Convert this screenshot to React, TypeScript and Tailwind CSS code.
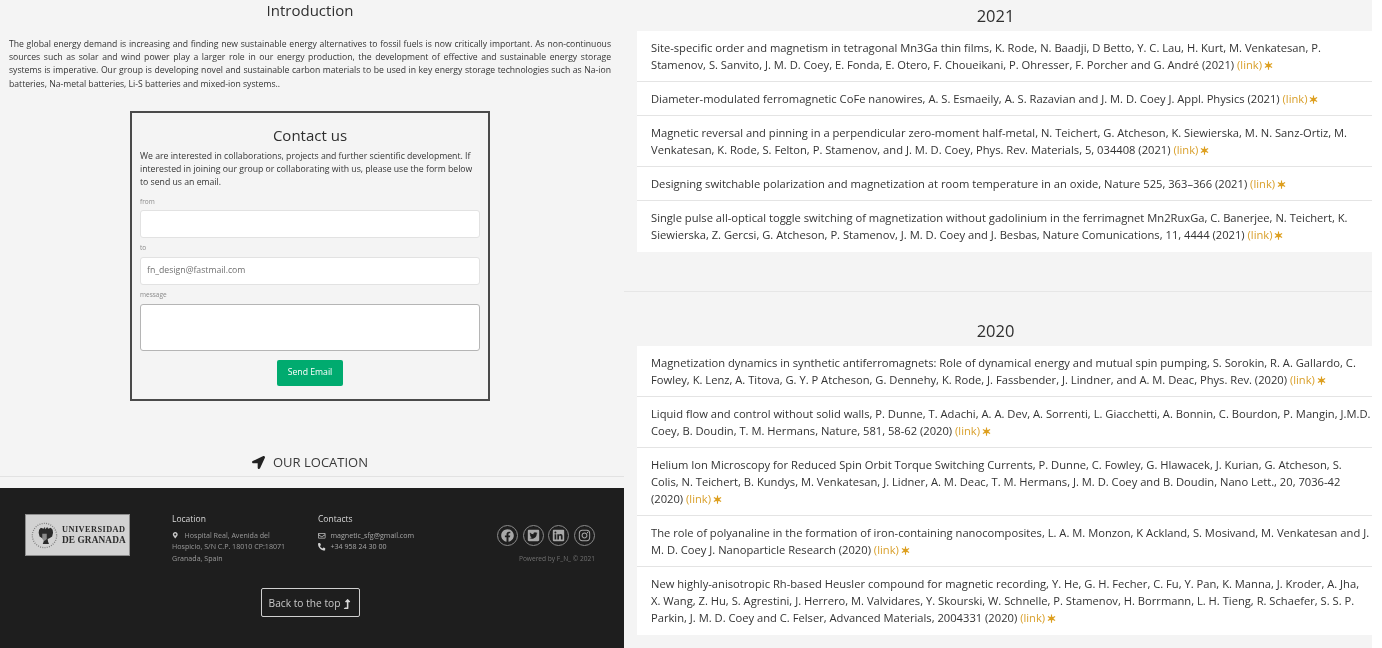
import React from "react";
import { FaLocationArrow, FaMapMarkerAlt, FaPhone, FaRegEnvelope, FaFacebook, FaTwitterSquare, FaLinkedin, FaInstagram, FaLevelUpAlt } from "react-icons/fa";

const font = { fontFamily: '"Open Sans", sans-serif' };

function Star() {
  return (
    <svg viewBox="0 0 12 12" className="inline-block w-[9px] h-[9px] align-[-0.5px] ml-[-1px]" fill="#dd9f1f" stroke="#dd9f1f">
      <circle cx="6" cy="6" r="2.800" stroke="none" />
      <path d="M6 .5V11.5M1.2 3.200L10.800 8.800M10.800 3.200L1.200 8.800" strokeWidth="1.500" />
    </svg>
  );
}

function Pub({ text, last }: { text: string; last?: boolean }) {
  return (
    <li className={`bg-white pl-[14px] py-[8px] text-[11.180px] leading-[17px] text-[#333333] border-b ${last ? "border-white pr-[2px]" : "border-[#e4e4e4]"}`}>
      {text} <a className="text-[#d9a02c]">(link)</a> <Star />
    </li>
  );
}

const y2021 = [
  "Site-specific order and magnetism in tetragonal Mn3Ga thin films, K. Rode, N. Baadji, D Betto, Y. C. Lau, H. Kurt, M. Venkatesan, P. Stamenov, S. Sanvito, J. M. D. Coey, E. Fonda, E. Otero, F. Choueikani, P. Ohresser, F. Porcher and G. André (2021)",
  "Diameter-modulated ferromagnetic CoFe nanowires, A. S. Esmaeily, A. S. Razavian and J. M. D. Coey J. Appl. Physics (2021)",
  "Magnetic reversal and pinning in a perpendicular zero-moment half-metal, N. Teichert, G. Atcheson, K. Siewierska, M. N. Sanz-Ortiz, M. Venkatesan, K. Rode, S. Felton, P. Stamenov, and J. M. D. Coey, Phys. Rev. Materials, 5, 034408 (2021)",
  "Designing switchable polarization and magnetization at room temperature in an oxide, Nature 525, 363–366 (2021)",
  "Single pulse all-optical toggle switching of magnetization without gadolinium in the ferrimagnet Mn2RuxGa, C. Banerjee, N. Teichert, K. Siewierska, Z. Gercsi, G. Atcheson, P. Stamenov, J. M. D. Coey and J. Besbas, Nature Comunications, 11, 4444 (2021)",
];
const y2020 = [
  "Magnetization dynamics in synthetic antiferromagnets: Role of dynamical energy and mutual spin pumping, S. Sorokin, R. A. Gallardo, C. Fowley, K. Lenz, A. Titova, G. Y. P Atcheson, G. Dennehy, K. Rode, J. Fassbender, J. Lindner, and A. M. Deac, Phys. Rev. (2020)",
  "Liquid flow and control without solid walls, P. Dunne, T. Adachi, A. A. Dev, A. Sorrenti, L. Giacchetti, A. Bonnin, C. Bourdon, P. Mangin, J.M.D. Coey, B. Doudin, T. M. Hermans, Nature, 581, 58-62 (2020)",
  "Helium Ion Microscopy for Reduced Spin Orbit Torque Switching Currents, P. Dunne, C. Fowley, G. Hlawacek, J. Kurian, G. Atcheson, S. Colis, N. Teichert, B. Kundys, M. Venkatesan, J. Lidner, A. M. Deac, T. M. Hermans, J. M. D. Coey and B. Doudin, Nano Lett., 20, 7036-42 (2020)",
  "The role of polyanaline in the formation of iron-containing nanocomposites, L. A. M. Monzon, K Ackland, S. Mosivand, M. Venkatesan and J. M. D. Coey J. Nanoparticle Research (2020)",
  "New highly-anisotropic Rh-based Heusler compound for magnetic recording, Y. He, G. H. Fecher, C. Fu, Y. Pan, K. Manna, J. Kroder, A. Jha, X. Wang, Z. Hu, S. Agrestini, J. Herrero, M. Valvidares, Y. Skourski, W. Schnelle, P. Stamenov, H. Borrmann, L. H. Tieng, R. Schaefer, S. S. P. Parkin, J. M. D. Coey and C. Felser, Advanced Materials, 2004331 (2020)",
];

function Logo() {
  return (
    <div className="w-[105px] h-[42px] bg-[#d2d2d2] border border-[#8d8d8d] flex items-center pl-[5px] gap-[4px] shrink-0">
      <svg viewBox="0 0 30 30" className="w-[27px] h-[27px] shrink-0">
        <circle cx="15" cy="15" r="13.500" fill="none" stroke="#777" strokeWidth="1.400" strokeDasharray="1 1.500" />
        <path d="M15 6l1 2 2-2.500 1 2 3-1 2 2 .5 3.500-1 4-3 2-2 1 .5 3 1 2.500h-7l1-2.500.5-3-2-1-3-2-1-4 .5-3.500 2-2 3 1 1-2 2 2.500z" fill="#2a2a2a" />
        <path d="M12.500 13h5v6l-2.500 2-2.500-2z" fill="#8a8a8a" />
      </svg>
      <div className="text-[#2b2b2b] font-bold leading-[11px] whitespace-nowrap" style={{ fontFamily: '"Liberation Serif", serif' }}>
        <div className="text-[8.300px] tracking-[0.45px]">UNIVERSIDAD</div>
        <div className="text-[9.300px] tracking-[0.1px]">DE GRANADA</div>
      </div>
    </div>
  );
}

function Field({ label, value, tall, tight }: { label: string; value?: string; tall?: boolean; tight?: boolean }) {
  return (
    <div>
      <div className={`text-[6.500px] leading-[9px] text-[#8a8a8a] ${tight ? "mb-[4px]" : "mb-[5px]"}`}>{label}</div>
      {tall ? (
        <div className="h-[47px] bg-white rounded-[3px] border border-[#b5b5b5]" />
      ) : (
        <div className="h-[28px] bg-white rounded-[3px] border border-[#e2e2e2] px-[6px] flex items-center text-[8.700px] text-[#707070]">{value}</div>
      )}
    </div>
  );
}

function Social({ children }: { children: React.ReactNode }) {
  return <div className="w-[21px] h-[21px] rounded-full border border-[#8a8a8a] flex items-center justify-center text-[#a8a8a8] text-[13px]">{children}</div>;
}

export default function App() {
  return (
    <div className="w-[1382px] h-[648px] overflow-hidden bg-white flex will-change-transform" style={font}>
      <div className="w-[624px] shrink-0 bg-[#f4f4f4] flex flex-col">
        <h2 className="text-center text-[15px] leading-[20px] text-[#2f2f2f] h-[38px] pr-[4px]">Introduction</h2>
        <p className="pl-[9px] pr-[13px] text-[8.650px] leading-[13.200px] text-[#333333] text-justify h-[73px]">
          The global energy demand is increasing and finding new sustainable energy alternatives to fossil fuels is now critically important. As non-continuous sources such as solar and wind power play a larger role in our energy production, the development of effective and sustainable energy storage systems is imperative. Our group is developing novel and sustainable carbon materials to be used in key energy storage technologies such as Na-ion batteries, Na-metal batteries, Li-S batteries and mixed-ion systems..
        </p>
        <div className="mx-[130px] w-[360px] h-[290px] border-2 border-[#4a4a4a] px-[8px]">
          <h3 className="text-center text-[15px] leading-[22px] text-[#2f2f2f] mt-[11px]">Contact us</h3>
          <p className="text-[8.700px] leading-[13px] text-[#333333] mt-[4px] mb-[8px]">
            We are interested in collaborations, projects and further scientific development. If interested in joining our group or collaborating with us, please use the form below to send us an email.
          </p>
          <div className="flex flex-col gap-[5px]">
            <Field label="from" tight />
            <Field label="to" value="fn_design@fastmail.com" />
            <Field label="message" tall />
          </div>
          <div className="flex justify-center mt-[9px]">
            <div className="w-[66px] h-[26px] rounded-[2px] bg-[#00ab6f] text-white text-[8.700px] flex items-center justify-center">Send Email</div>
          </div>
        </div>
        <div className="mt-[51px] h-[25px] pb-[3px] pr-[4px] flex items-center justify-center gap-[8px] border-b border-[#e2e2e2] text-[13px] text-[#3a3a3a]">
          <FaLocationArrow className="text-[#222] text-[13px]" />
          <span>OUR LOCATION</span>
        </div>
        <footer className="mt-[11px] flex-1 bg-[#1e1e1e] relative">
          <div className="flex pl-[25px] pt-[25px]">
            <div className="pt-[1px]"><Logo /></div>
            <div className="ml-[42px] w-[120px] shrink-0">
              <div className="text-[8.500px] leading-[11px] text-[#d8d8d8]">Location</div>
              <div className="text-[7.100px] leading-[11.300px] text-[#9a9a9a] mt-[6px]">
                <FaMapMarkerAlt className="inline text-[#c8c8c8] mr-[6px] text-[6.500px] align-[-0.5px]" />
                Hospital Real, Avenida del Hospicio, S/N C.P. 18010 CP:18071 Granada, Spain
              </div>
            </div>
            <div className="ml-[26px] w-[140px] shrink-0">
              <div className="text-[8.500px] leading-[11px] text-[#d8d8d8]">Contacts</div>
              <div className="text-[7.100px] leading-[11.300px] text-[#a8a8a8] mt-[6px]">
                <div className="flex items-center gap-[5px]"><FaRegEnvelope className="text-[#c0c0c0] text-[7.500px]" />magnetic_sfg@gmail.com</div>
                <div className="flex items-center gap-[5px]"><FaPhone className="text-[#d0d0d0] text-[7.500px] -scale-x-100" />+34 958 24 30 00</div>
              </div>
            </div>
            <div className="ml-[40px] w-[97px] mt-[12px] flex flex-col items-end">
              <div className="flex gap-[4.700px]">
                <Social><FaFacebook /></Social>
                <Social><FaTwitterSquare /></Social>
                <Social><FaLinkedin /></Social>
                <Social><FaInstagram /></Social>
              </div>
              <div className="text-[6.600px] leading-[9px] text-[#707070] mt-[8px] whitespace-nowrap">Powered by F_N_ © 2021</div>
            </div>
          </div>
          <div className="absolute left-[261px] top-[100px] w-[99px] h-[29px] pt-[2px] border border-[#d0d0d0] rounded-[2px] flex items-center justify-center text-[10.200px] text-[#c8c8c8] whitespace-nowrap">
            Back to the top <FaLevelUpAlt className="text-[10px] ml-[2px] text-[#d8d8d8]" />
          </div>
        </footer>
      </div>
      <div className="w-[748px] shrink-0 bg-[#f4f4f4]">
        <section className="h-[292px] border-b border-[#e6e6e6]">
          <h2 className="text-center text-[16.500px] leading-[22px] text-[#2f2f2f] pt-[5px] pr-[5px] h-[31px]">2021</h2>
          <ul className="ml-[13px]">{y2021.map((t, i) => <Pub key={i} text={t} last={i === y2021.length - 1} />)}</ul>
        </section>
        <section>
          <h2 className="text-center text-[16.500px] leading-[22px] text-[#2f2f2f] pt-[28px] pr-[5px] h-[54px]">2020</h2>
          <ul className="ml-[13px]">{y2020.map((t, i) => <Pub key={i} text={t} last={i === y2020.length - 1} />)}</ul>
        </section>
      </div>
    </div>
  );
}
